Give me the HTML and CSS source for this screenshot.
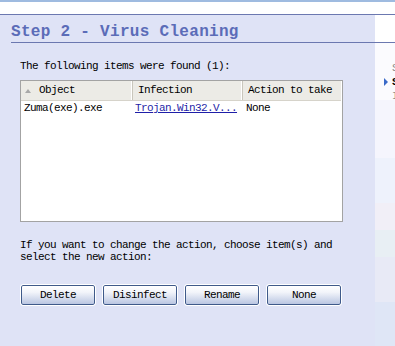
FILE: index.html
```html
<!DOCTYPE html>
<html>
<head>
<meta charset="utf-8">
<link rel="stylesheet" href="styles.css">
</head>
<body>
<div class="topbar"></div>
<div class="topwhite"></div>
<div class="head">
  <div class="head-main"><div class="title">Step 2 - Virus Cleaning</div></div>
  <div class="head-side"></div>
</div>
<div class="main">
  <div class="panel">
    <div class="found">The following items were found (1):</div>
    <div class="table">
      <div class="thead">
        <div class="th c1"><span class="sort"></span>Object</div>
        <div class="th c2">Infection</div>
        <div class="th c3">Action to take</div>
      </div>
      <div class="row">
        <div class="td c1">Zuma(exe).exe</div>
        <div class="td c2"><a class="link">Trojan.Win32.V...</a></div>
        <div class="td c3">None</div>
      </div>
    </div>
    <div class="hint">If you want to change the action, choose item(s) and<br>select the new action:</div>
    <div class="buttons">
      <div class="btn">Delete</div>
      <div class="btn">Disinfect</div>
      <div class="btn">Rename</div>
      <div class="btn">None</div>
    </div>
  </div>
  <div class="side">
    <div class="side-top">
      <div class="nav dim">Scan</div>
      <div class="nav cur"><span class="arrow"></span>Step</div>
      <div class="nav dim">Info</div>
    </div>
    <div class="tile t1"></div>
    <div class="tile t2"></div>
    <div class="tile t3"></div>
    <div class="tile t4"></div>
    <div class="tile t5"></div>
    <div class="tile t6"></div>
  </div>
</div>
</body>
</html>
```

FILE: styles.css
```css
html, body {
  margin: 0;
  padding: 0;
  background: #ffffff;
  width: 395px;
  height: 346px;
  overflow: hidden;
  font-family: "Liberation Mono", "DejaVu Sans Mono", monospace;
  font-size: 11px;
  letter-spacing: -0.6px;
  color: #000;
}
.topbar {
  height: 2px;
  background: #9fbbe0;
}
.topwhite {
  height: 12px;
  background: #ffffff;
  border-bottom: 1px solid #6b78b0;
}
.head {
  display: flex;
  height: 28px;
}
.head-main {
  width: 375px;
  background: #dfe3f6;
  padding-left: 11px;
  box-sizing: border-box;
  display: flex;
}
.title {
  flex: 1;
  border-bottom: 1px solid #6b78b0;
  color: #5b6cb8;
  font-size: 16px;
  font-weight: bold;
  letter-spacing: 0.3px;
  line-height: 18px;
  padding-top: 8px;
  box-sizing: border-box;
}
.head-side {
  width: 20px;
  border-bottom: 1px solid #6b78b0;
  background: #fff;
}
.main {
  display: flex;
  height: 303px;
}
.panel {
  width: 375px;
  background: #dfe3f6;
  padding: 17px 0 0 20px;
  box-sizing: border-box;
}
.found {
  line-height: 13px;
}
.table {
  margin-top: 7px;
  width: 323px;
  height: 142px;
  box-sizing: border-box;
  border: 1px solid #a3a3a3;
  background: #fff;
}
.thead {
  display: flex;
  height: 19px;
  background: #ecebe6;
  border-bottom: 1px solid #d6d3ca;
  margin-right: 1px;
}
.th {
  line-height: 19px;
  padding-left: 5px;
  box-sizing: border-box;
  border-right: 1px solid #c9c6bc;
  box-shadow: inset -1px 0 0 #ffffff;
}
.th.c3 {
  border-right: none;
  box-shadow: none;
}
.c1 { width: 112px; }
.c2 { width: 110px; }
.c3 { flex: 1; }
.th.c1 {
  padding-left: 4px;
  display: flex;
  align-items: center;
}
.sort {
  width: 0;
  height: 0;
  border-left: 3.5px solid transparent;
  border-right: 3.5px solid transparent;
  border-bottom: 4px solid #a8a8a8;
  margin-right: 8px;
}
.row {
  display: flex;
  height: 15px;
}
.td {
  line-height: 15px;
  padding-left: 3px;
  box-sizing: border-box;
  white-space: nowrap;
}
.td.c2 { padding-left: 2px; }
.td.c3 { padding-left: 3px; }
.link {
  color: #1f1fa8;
  text-decoration: underline;
}
.hint {
  margin-top: 17px;
  line-height: 12px;
}
.buttons {
  display: flex;
  gap: 8px;
  margin-top: 22px;
  padding-left: 1px;
}
.btn {
  width: 74px;
  height: 20px;
  box-sizing: border-box;
  border: 1px solid #3f5a8a;
  border-radius: 2px;
  outline: 1px solid #ffffff;
  background: linear-gradient(#ffffff 0%, #f2f4fa 35%, #bac6e2 100%);
  text-align: center;
  line-height: 18px;
}
.side {
  width: 20px;
  display: flex;
  flex-direction: column;
  overflow: hidden;
}
.side-top {
  height: 57px;
  background: #fbfbfe;
  padding-top: 18px;
  box-sizing: border-box;
  position: relative;
}
.nav {
  padding-left: 17px;
  line-height: 14px;
  white-space: nowrap;
}
.nav.dim { color: #8a8a8a; }
.nav.cur { color: #000; font-weight: bold; position: relative; }
.arrow {
  position: absolute;
  left: 9px;
  top: 3px;
  width: 0;
  height: 0;
  border-top: 4px solid transparent;
  border-bottom: 4px solid transparent;
  border-left: 4px solid #3a6ac8;
}
.tile { flex: none; }
.t1 { height: 58px; background: #f5f5fd; }
.t2 { height: 45px; background: #eef2fc; }
.t3 { height: 27px; background: #f1eff7; }
.t4 { height: 27px; background: #e8eff4; }
.t5 { height: 45px; background: #e8eaf6; }
.t6 { flex: 1; background: #dfe6f6; }
```
